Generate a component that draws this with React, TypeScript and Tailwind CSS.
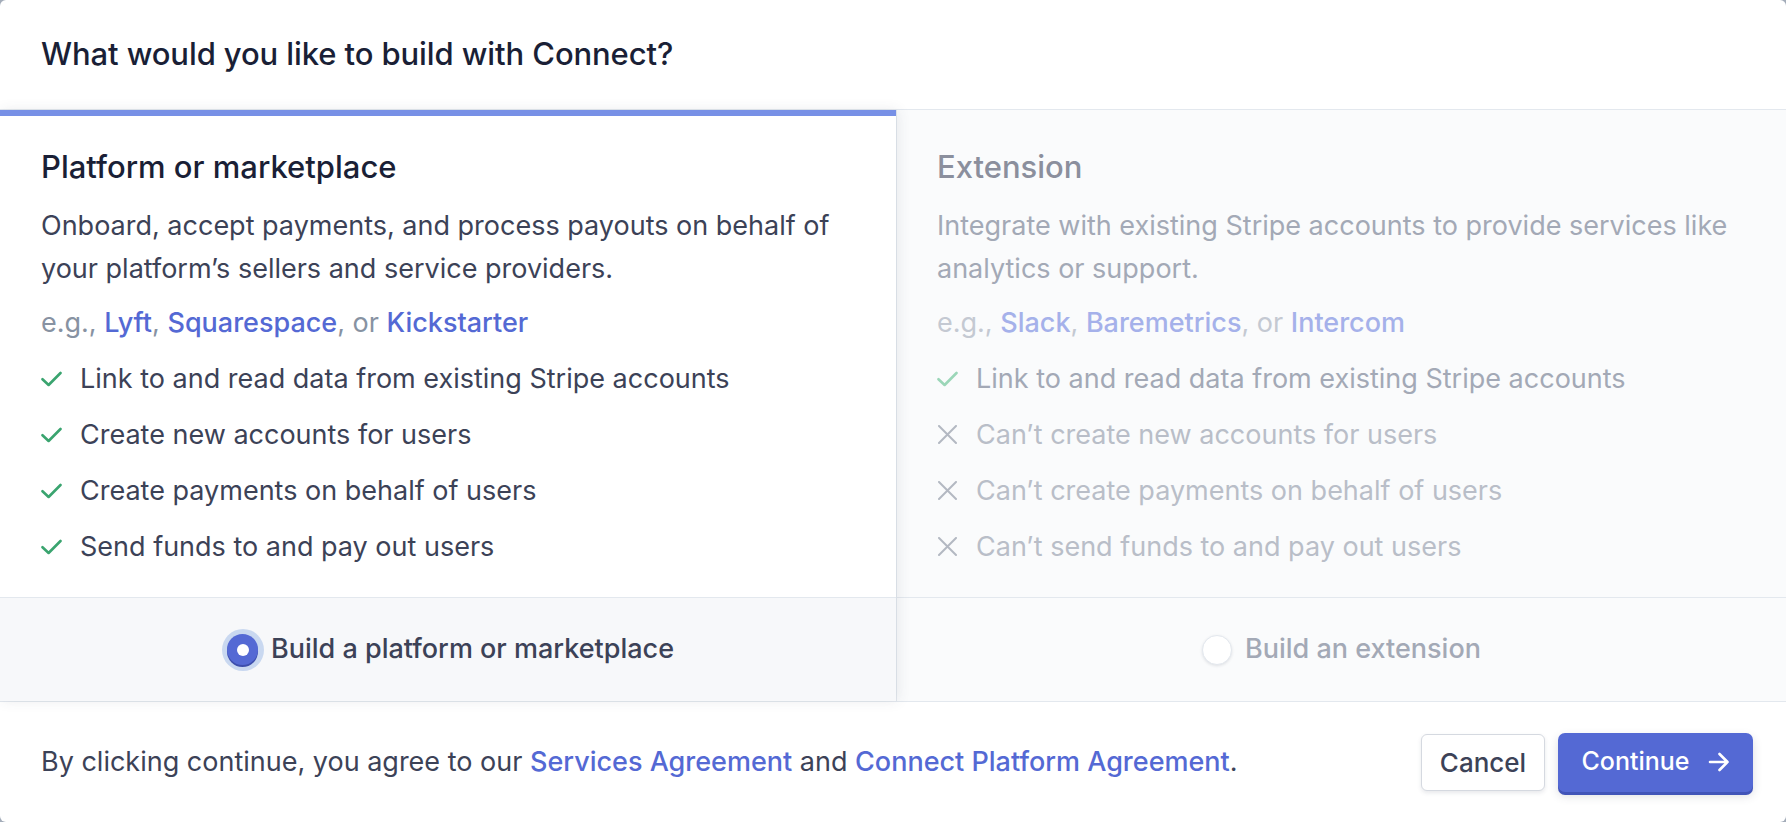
const LEFT_FEATURES = [
  "Link to and read data from existing Stripe accounts",
  "Create new accounts for users",
  "Create payments on behalf of users",
  "Send funds to and pay out users",
];

const RIGHT_FEATURES: { ok: boolean; label: string }[] = [
  { ok: true, label: "Link to and read data from existing Stripe accounts" },
  { ok: false, label: "Can’t create new accounts for users" },
  { ok: false, label: "Can’t create payments on behalf of users" },
  { ok: false, label: "Can’t send funds to and pay out users" },
];

function CheckMark({ color }: { color: string }) {
  return (
    <svg width="21" height="16" viewBox="0 0 21 16" className="shrink-0" style={{ color }}>
      <path d="M1.5 8.2 L7.6 14 L19.5 2" fill="none" stroke="currentColor" strokeWidth="2.6" strokeLinecap="round" strokeLinejoin="round" />
    </svg>
  );
}

function Cross() {
  return (
    <svg width="21" height="19" viewBox="0 0 21 19" className="shrink-0 text-[#b3b8c2]">
      <path d="M2 1 L19 18 M19 1 L2 18" fill="none" stroke="currentColor" strokeWidth="2" strokeLinecap="round" />
    </svg>
  );
}

function Arrow() {
  return (
    <svg width="22" height="22" viewBox="0 0 22 22" className="shrink-0">
      <path d="M2 11 H19.5 M11.5 3 L19.5 11 L11.5 19" fill="none" stroke="white" strokeWidth="2.6" strokeLinecap="round" strokeLinejoin="round" />
    </svg>
  );
}

export default function App() {
  return (
    <div
      className="w-[1786px] h-[822px] bg-[#a3acb9] overflow-hidden"
      style={{ fontFamily: "Inter, 'Noto Sans', sans-serif" }}
    >
      <div className="w-full h-full bg-white rounded-[6px] flex flex-col">
        {/* Header */}
        <div className="h-[110px] shrink-0 flex items-center px-[41px] border-b border-[#e3e8ee]">
          <h1 className="text-[31px] font-medium text-[#1a1f36] tracking-[-0.1px]">
            What would you like to build with Connect?
          </h1>
        </div>

        {/* Options */}
        <div className="flex h-[592px] shrink-0 border-b border-[#e3e8ee]">
          {/* Platform */}
          <div className="w-[896px] shrink-0 flex flex-col bg-white relative z-10 shadow-[2px_0_12px_rgba(60,66,87,0.10)]">
            <div className="h-[6px] bg-[#7790e6]" />
            <div className="flex-1 px-[41px] pt-[33px]">
              <h2 className="text-[31px] leading-[36px] font-medium text-[#1a1f36]">
                Platform or marketplace
              </h2>
              <p className="mt-[19px] text-[27px] leading-[43px] text-[#3c4257]">
                Onboard, accept payments, and process payouts on behalf of
                <br />
                your platform’s sellers and service providers.
              </p>
              <p className="mt-[11px] text-[27px] leading-[43px] text-[#8792a2]">
                e.g., <span className="text-[#5469d4] font-medium">Lyft</span>,{" "}
                <span className="text-[#5469d4] font-medium">Squarespace</span>, or{" "}
                <span className="text-[#5469d4] font-medium">Kickstarter</span>
              </p>
              <ul className="mt-[13px] flex flex-col gap-[13px]">
                {LEFT_FEATURES.map((f) => (
                  <li key={f} className="flex items-center gap-[18px] text-[27px] leading-[43px] text-[#3c4257]">
                    <CheckMark color="#3aa46f" />
                    {f}
                  </li>
                ))}
              </ul>
            </div>
            <div className="h-[104px] shrink-0 bg-[#f7f8fa] border-t border-[#e3e8ee] flex items-center justify-center gap-[7px]">
              <span className="w-[42px] h-[42px] rounded-full bg-[#c9d8f0] flex items-center justify-center">
                <span className="w-[31px] h-[31px] rounded-full bg-[#5469d4] shadow-[0_2px_0_#3d4eac] flex items-center justify-center">
                  <span className="w-[12px] h-[12px] rounded-full bg-white" />
                </span>
              </span>
              <span className="text-[27px] text-[#3c4257] font-medium">
                Build a platform or marketplace
              </span>
            </div>
          </div>

          {/* Extension */}
          <div className="flex-1 flex flex-col bg-[#fafbfc] border-l border-[#e3e8ee]">
            <div className="h-[6px]" />
            <div className="flex-1 px-[40px] pt-[33px]">
              <h2 className="text-[31px] leading-[36px] font-medium text-[#8b8f9d]">
                Extension
              </h2>
              <p className="mt-[19px] text-[27px] leading-[43px] text-[#a3a9b6]">
                Integrate with existing Stripe accounts to provide services like
                <br />
                analytics or support.
              </p>
              <p className="mt-[11px] text-[27px] leading-[43px] text-[#c4c9d2]">
                e.g., <span className="text-[#a5b1ea] font-medium">Slack</span>,{" "}
                <span className="text-[#a5b1ea] font-medium">Baremetrics</span>, or{" "}
                <span className="text-[#a5b1ea] font-medium">Intercom</span>
              </p>
              <ul className="mt-[13px] flex flex-col gap-[13px]">
                {RIGHT_FEATURES.map((f) => (
                  <li
                    key={f.label}
                    className={`flex items-center gap-[18px] text-[27px] leading-[43px] ${
                      f.ok ? "text-[#a3a9b6]" : "text-[#b9bec8]"
                    }`}
                  >
                    {f.ok ? <CheckMark color="#9bd6b8" /> : <Cross />}
                    {f.label}
                  </li>
                ))}
              </ul>
            </div>
            <div className="h-[104px] shrink-0 border-t border-[#e3e8ee] flex items-center justify-center gap-[13px]">
              <span className="w-[30px] h-[30px] rounded-full bg-white border border-[#e3e8ee] shadow-[0_1px_3px_rgba(60,66,87,0.14)]" />
              <span className="text-[27px] text-[#a3a9b6] font-medium">Build an extension</span>
            </div>
          </div>
        </div>

        {/* Footer */}
        <div className="flex-1 flex items-center justify-between pl-[41px] pr-[33px]">
          <p className="text-[27px] text-[#3c4257]">
            By clicking continue, you agree to our{" "}
            <span className="text-[#5469d4] font-medium">Services Agreement</span> and{" "}
            <span className="text-[#5469d4] font-medium">Connect Platform Agreement</span>.
          </p>
          <div className="flex items-center gap-[13px]">
            <button className="h-[57px] w-[124px] rounded-[6px] bg-white border border-[#d5d9e0] shadow-[0_2px_4px_rgba(60,66,87,0.12)] text-[26px] font-medium text-[#3c4257]">
              Cancel
            </button>
            <button className="h-[59px] w-[195px] rounded-[7px] bg-[#5469d4] shadow-[0_3px_0_#4154b8,0_4px_10px_rgba(60,66,87,0.18)] text-[25px] font-medium text-white flex items-center justify-center gap-[18px]">
              Continue
              <Arrow />
            </button>
          </div>
        </div>
      </div>
    </div>
  );
}
